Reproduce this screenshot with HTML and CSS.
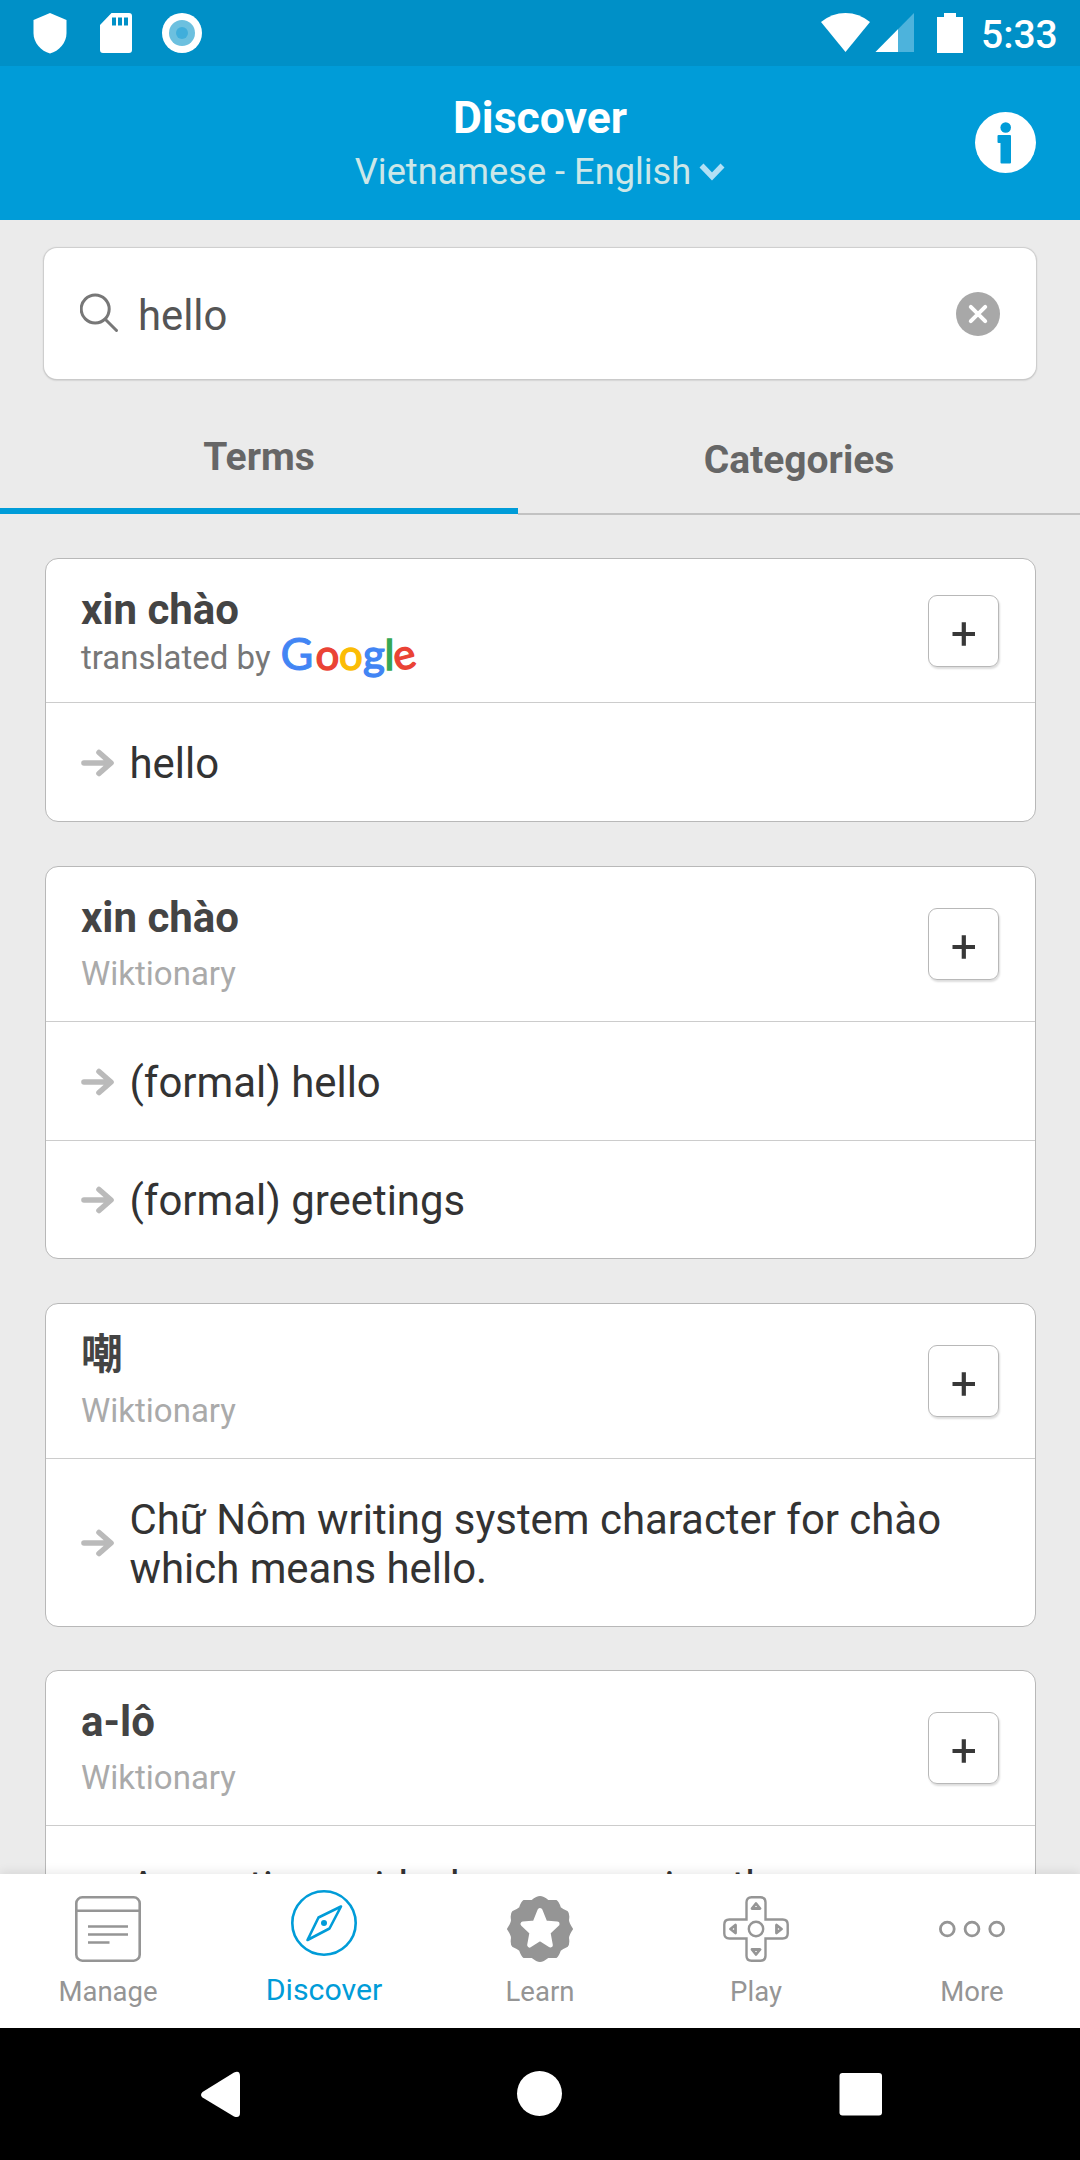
FILE: index.html
```html
<!DOCTYPE html>
<html lang="en">
<head>
<meta charset="utf-8">
<title>Discover</title>
<link rel="stylesheet" href="styles.css">
</head>
<body>
<svg class="defs" width="0" height="0" aria-hidden="true">
  <symbol id="arrow" viewBox="0 0 33 28"><path d="M3 14H28M18 3.500L30 14L18 24.500" fill="none" stroke="#bababa" stroke-width="5.600" stroke-linecap="round" stroke-linejoin="round"/></symbol>
  <symbol id="plus" viewBox="0 0 24 24"><path d="M.5 12H23M11.800 .3V23.700" fill="none" stroke="#383838" stroke-width="4.200"/></symbol>
</svg>
<div class="screen">
  <div class="statusbar">
    <svg class="status-left" width="180" height="66" viewBox="0 0 180 66">
      <path fill="#fff" d="M17 13L33.500 20V33C33.500 43 26 51 17 53.500C8 51 .5 43 .5 33V20Z"/>
      <path fill="#fff" fill-rule="evenodd" d="M78.500 13H96Q99 13 99 16V50Q99 53 96 53H70Q67 53 67 50V25ZM79 17.500V25.500H83V17.500ZM85 17.500V25.500H89V17.500ZM91 17.500V25.500H95V17.500Z"/>
      <circle cx="149" cy="33" r="20" fill="#fff"/><circle cx="149" cy="33" r="13" fill="#6cc0df"/><circle cx="149" cy="33" r="6" fill="#40aedb"/>
    </svg>
    <div class="status-right">
      <svg width="143" height="66" viewBox="820 0 143 66">
        <path fill="#fff" d="M821 22Q832 13 845.500 13T870 22L845.500 52Z"/>
        <path fill="#4db3dc" d="M914 13V52H875.500Z"/><path fill="#fff" d="M898 29.200V52H875.500Z"/>
        <path fill="#fff" d="M944 13H956V17H963V53H937V17H944Z"/>
      </svg>
      <span class="clock">5:33</span>
    </div>
  </div>
  <header class="header">
    <div class="heading">
      <h1 class="title">Discover</h1>
      <div class="language"><span>Vietnamese - English</span>
        <svg width="26" height="18" viewBox="0 0 26 18"><path d="M2.500 2.500L13 13.500L23.500 2.500" fill="none" stroke="#b2e0f5" stroke-width="5.500"/></svg>
      </div>
    </div>
    <svg class="info" width="61" height="61" viewBox="0 0 61 61"><circle cx="30.500" cy="30.500" r="30.500" fill="#fff"/><circle cx="30.700" cy="15.500" r="5.300" fill="#009cd8"/><path fill="#009cd8" d="M23.500 23H35Q36 23 36 24V50.500Q36 51.500 35 51.500H26.500Q25.500 51.500 25.500 50.500V31H23.500Q22.500 31 22.500 30V24Q22.500 23 23.500 23Z"/></svg>
  </header>
  <main class="content">
    <div class="search">
      <svg class="lens" width="40" height="40" viewBox="0 0 40 40" fill="none" stroke="#777" stroke-width="3"><circle cx="15.200" cy="16" r="14"/><path d="M25.500 26.500L36.500 37.500" stroke-linecap="round"/></svg>
      <span class="query">hello</span>
      <svg class="clear" width="44" height="44" viewBox="0 0 44 44"><circle cx="22" cy="22" r="22" fill="#a8a8a8"/><path d="M14.800 14.800L29.200 29.200M29.200 14.800L14.800 29.200" stroke="#fff" stroke-width="4" stroke-linecap="round"/></svg>
    </div>
    <nav class="tabs"><span class="tab tab-active">Terms</span><span class="tab">Categories</span></nav>
    <section class="results">
      <article class="card">
        <div class="card-head card-head-short">
          <div><h2 class="term">xin chào</h2>
            <div class="translated"><span>translated by</span>
              <svg class="google" width="136" height="46" viewBox="0 0 136 46"><text y="34.500"><tspan class="google-cap g-blue" x="-1.500">G</tspan><tspan class="g-red" x="33.500">o</tspan><tspan class="g-yellow" x="57">o</tspan><tspan class="g-blue" x="81">g</tspan><tspan class="g-green" x="102.500">l</tspan><tspan class="g-red" x="114.500" y="36.500" rotate="-14">e</tspan></text></svg>
            </div></div>
          <div class="add"><svg width="24" height="24"><use href="#plus"/></svg></div>
        </div>
        <div class="meaning"><svg width="33" height="28"><use href="#arrow"/></svg><p>hello</p></div>
      </article>
      <article class="card">
        <div class="card-head">
          <div><h2 class="term">xin chào</h2><div class="source">Wiktionary</div></div>
          <div class="add"><svg width="24" height="24"><use href="#plus"/></svg></div>
        </div>
        <div class="meaning"><svg width="33" height="28"><use href="#arrow"/></svg><p>(formal) hello</p></div>
        <div class="meaning"><svg width="33" height="28"><use href="#arrow"/></svg><p>(formal) greetings</p></div>
      </article>
      <article class="card">
        <div class="card-head">
          <div><h2 class="term term-han">嘲</h2><div class="source">Wiktionary</div></div>
          <div class="add"><svg width="24" height="24"><use href="#plus"/></svg></div>
        </div>
        <div class="meaning"><svg width="33" height="28"><use href="#arrow"/></svg><p>Chữ Nôm writing system character for chào which means hello.</p></div>
      </article>
      <article class="card card-last">
        <div class="card-head">
          <div><h2 class="term">a-lô</h2><div class="source">Wiktionary</div></div>
          <div class="add"><svg width="24" height="24"><use href="#plus"/></svg></div>
        </div>
        <div class="meaning"><svg width="33" height="28"><use href="#arrow"/></svg><p>A greeting said when answering the<br>telephone</p></div>
      </article>
    </section>
  </main>
  <nav class="bottom">
    <div class="item">
      <svg width="66" height="66" viewBox="0 0 66 66" fill="none" stroke="#959595" stroke-width="2.600"><rect x="1.300" y="1.300" width="63.400" height="63.400" rx="6"/><path d="M1.500 14.700H64.500M13 30.500H53M13 38.500H53M13 46.500H34.500"/></svg>
      <span>Manage</span></div>
    <div class="item item-active">
      <svg width="66" height="66" viewBox="0 0 66 66" fill="none" stroke="#009cd8" stroke-width="2.600"><circle cx="33" cy="33" r="31.700"/><path stroke-linejoin="round" d="M50 16.500L27.500 27.500L16.500 50L38.500 38.500Z"/><circle cx="33" cy="33" r="3" fill="#009cd8" stroke="none"/></svg>
      <span>Discover</span></div>
    <div class="item">
      <svg width="66" height="66" viewBox="0 0 66 66"><path fill="#959595" stroke="#959595" stroke-width="2" stroke-linejoin="round" d="M33 1Q36 1 41 5Q43 5 49 5Q51 6 53 12Q55 14 60 16Q62 18 61 24Q61 27 65 33Q61 39 61 42Q62 48 60 50Q55 52 53 54Q51 60 49 61Q43 61 41 61Q36 65 33 65Q30 65 25 61Q23 61 17 61Q15 60 13 54Q11 52 6 50Q4 48 5 42Q5 39 1 33Q5 27 5 24Q4 18 6 16Q11 14 13 12Q15 6 17 5Q23 5 25 5Q30 1 33 1Z"/><path fill="#fff" stroke="#fff" stroke-width="5" stroke-linejoin="round" d="M33 14.500L38 27L50 28L41 36.500L43.300 49L33 42.500L22.700 49L25 36.500L16 28L28 27Z"/></svg>
      <span>Learn</span></div>
    <div class="item">
      <svg width="66" height="66" viewBox="0 0 66 66" fill="none" stroke="#959595" stroke-width="2.400"><path d="M28.500 1.300H37.500Q42.500 1.300 42.500 6.300V23.500H59.700Q64.700 23.500 64.700 28.500V37.500Q64.700 42.500 59.700 42.500H42.500V59.700Q42.500 64.700 37.500 64.700H28.500Q23.500 64.700 23.500 59.700V42.500H6.300Q1.300 42.500 1.300 37.500V28.500Q1.300 23.500 6.300 23.500H23.500V6.300Q23.500 1.300 28.500 1.300Z"/><circle cx="33" cy="33" r="7.200"/><path stroke-linejoin="round" stroke-width="2.800" d="M33 7.500L37 12.500H29ZM33 58.500L37 53.500H29ZM7.500 33L12.500 29V37ZM58.500 33L53.500 29V37Z"/></svg>
      <span>Play</span></div>
    <div class="item">
      <svg width="66" height="66" viewBox="0 0 66 66" fill="none" stroke="#959595" stroke-width="2.800"><circle cx="8.300" cy="33" r="6.900"/><circle cx="33" cy="33" r="6.900"/><circle cx="57.700" cy="33" r="6.900"/></svg>
      <span>More</span></div>
  </nav>
  <div class="sysnav">
    <svg width="684" height="48" viewBox="199 2070 684 48" fill="#fff"><path d="M234 2072.500Q240 2070 240 2076V2113Q240 2118.500 234 2116.500L202.500 2097.500Q199.500 2095 202.500 2092Z"/><circle cx="539.500" cy="2093.500" r="22.500"/><rect x="839.500" y="2073" width="42.500" height="42.500" rx="3"/></svg>
  </div>
</div>
</body>
</html>
```
FILE: styles.css
```css
* { box-sizing: border-box; }
body { margin: 0; font-family: Roboto, "Noto Sans CJK SC", sans-serif; }
h1, h2, p { margin: 0; }
svg { display: block; flex: none; }
.defs { position: absolute; }
.screen { width: 1080px; height: 2160px; display: flex; flex-direction: column; overflow: hidden; background: #ebebeb; }

.statusbar { flex: none; height: 66px; display: flex; justify-content: space-between; padding: 0 23px 0 33px; background: #0090c7; }
.status-right { display: flex; }
.clock { width: 94px; padding-left: 18px; font-size: 39px; line-height: 70px; font-weight: 500; color: #fff; }

.header { flex: none; height: 154px; display: grid; grid-template-columns: 1fr auto 1fr; background: #009cd8; }
.heading { grid-column: 2; padding-top: 25px; text-align: center; }
.title { font-size: 44.500px; line-height: 54px; font-weight: 700; color: #fff; }
.language { display: flex; align-items: center; gap: 8px; font-size: 36.200px; line-height: 53px; color: #cce7e8; }
.info { justify-self: end; margin: 46px 44px 0 0; }

.content { flex: 1; min-height: 0; overflow: hidden; }
.search { height: 131px; margin: 28px 44px 0; padding: 0 36px; display: flex; align-items: center; border-radius: 13px; background: #fff; box-shadow: 0 0 1px 1px #ccc, 0 1px 2px #aaa; }
.lens { margin-top: -1px; }
.query { margin: 4px 0 0 18px; font-size: 41.800px; color: #555; }
.clear { margin-left: auto; }

.tabs { height: 136px; display: grid; grid-template-columns: 518px 1fr; }
.tab { padding-top: 58px; border-bottom: 2px solid #c2c2c2; font-size: 39px; line-height: 46px; font-weight: 700; color: #666; text-align: center; }
.tab-active { height: 135px; padding-top: 55px; border-bottom: 6px solid #009cd8; }

.results { padding: 43px 44.500px 0; display: flex; flex-direction: column; gap: 44px; }
.card { border: 1px solid #b8b8b8; border-radius: 13px; background: #fff; }
.card-last { margin-top: -1px; }
.card-head { height: 154px; padding: 0 35.500px; display: flex; align-items: center; justify-content: space-between; }
.card-head > div:first-child { align-self: flex-start; padding-top: 26px; }
.card-head-short { height: 143px; }
.term { height: 50px; font-size: 42px; line-height: 50px; font-weight: 700; color: #444; }
.term-han { font-family: "Noto Sans CJK SC", sans-serif; line-height: 41px; }
.source { margin-top: 11px; font-size: 33px; line-height: 40px; color: #aaa; }
.translated { height: 46px; display: flex; gap: 11px; font-size: 33px; line-height: 45px; color: #777; }
.google { overflow: visible; font-family: Lato, sans-serif; font-size: 42px; stroke-width: 1.400px; }
.google-cap { font-size: 45px; stroke-width: 1px; }
.g-blue { fill: #4285f4; stroke: #4285f4; }
.g-red { fill: #ea4335; stroke: #ea4335; }
.g-yellow { fill: #fbbc05; stroke: #fbbc05; }
.g-green { fill: #34a853; stroke: #34a853; }
.add { width: 71px; height: 72px; display: flex; align-items: center; justify-content: center; padding-top: 6px; border: 1px solid #b8b8b8; border-radius: 9px; box-shadow: 1px 2px 2px #ddd; }
.meaning { padding: 35px 35.500px 34px; display: flex; align-items: center; gap: 15.500px; border-top: 1px solid #ccc; font-size: 41.900px; line-height: 49px; color: #333; }
.meaning p { margin: 1px 0 -1px; }
.meaning + .meaning { padding: 34px 35.500px; }

.bottom { position: relative; flex: none; height: 154px; display: grid; grid-template-columns: repeat(5, 1fr); background: #fff; box-shadow: 0 -2px 10px rgba(0, 0, 0, .09); }
.item { display: flex; flex-direction: column; align-items: center; padding-top: 22px; font-size: 27.500px; line-height: 34px; color: #959595; }
.item span { margin-top: 13px; }
.item-active { padding-top: 16px; font-size: 30.300px; color: #009cd8; }
.item-active span { margin-top: 17px; }
.sysnav { flex: none; height: 132px; padding: 42px 0 0 199px; background: #000; }
```
